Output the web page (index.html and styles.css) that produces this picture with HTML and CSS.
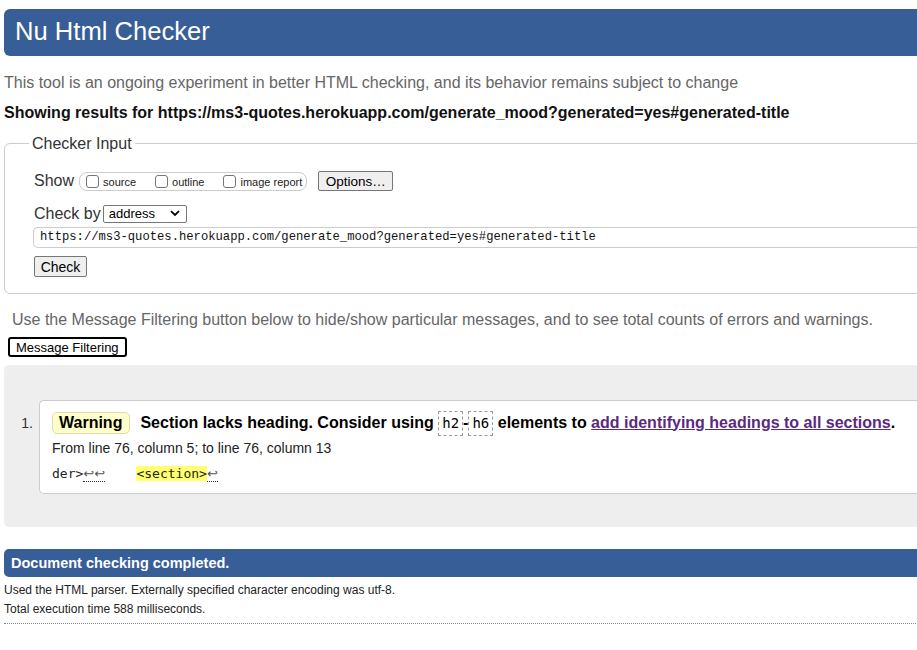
FILE: index.html
```html
<!DOCTYPE html>
<html>
<head>
<meta charset="utf-8">
<title>Nu Html Checker</title>
<link rel="stylesheet" href="styles.css">
</head>
<body>
<div class="page">
  <h1 class="masthead">Nu Html Checker</h1>
  <p class="intro">This tool is an ongoing experiment in better HTML checking, and its behavior remains subject to change</p>
  <p class="showing">Showing results for https://ms3-quotes.herokuapp.com/generate_mood?generated=yes#generated-title</p>

  <fieldset class="checker">
    <legend class="legend">Checker Input</legend>
    <div class="row row-show">
      <span class="row-label">Show</span>
      <span class="opts">
        <span class="opt"><span class="cb"></span><span class="opt-text">source</span></span>
        <span class="opt"><span class="cb"></span><span class="opt-text">outline</span></span>
        <span class="opt opt-last"><span class="cb"></span><span class="opt-text">image report</span></span>
      </span>
      <span class="btn btn-options">Options…</span>
    </div>
    <div class="row row-checkby">
      <span class="row-label">Check by</span>
      <span class="select"><span class="select-text">address</span><svg class="chev" width="10" height="7" viewBox="0 0 10 7"><path d="M1 1.2 L5 5 L9 1.2" fill="none" stroke="#000" stroke-width="1.8"/></svg></span>
    </div>
    <div class="url">https://ms3-quotes.herokuapp.com/generate_mood?generated=yes#generated-title</div>
    <div class="row row-check"><span class="btn btn-check">Check</span></div>
  </fieldset>

  <p class="filter-note">Use the Message Filtering button below to hide/show particular messages, and to see total counts of errors and warnings.</p>
  <div class="filter-wrap"><span class="btn-filter">Message Filtering</span></div>

  <div class="results">
    <ol class="msgs">
      <li class="msg">
        <span class="num">1.</span>
        <div class="msg-box">
          <p class="msg-line"><span class="badge">Warning</span><span class="msg-text">Section lacks heading. Consider using <code class="el">h2</code>-<code class="el">h6</code> elements to <a class="link" href="#">add identifying headings to all sections</a>.</span></p>
          <p class="loc">From line 76, column 5; to line 76, column 13</p>
          <p class="extract">der&gt;<span class="lf">↩↩</span>    <mark class="hl">&lt;section&gt;</mark><span class="lf">↩</span></p>
        </div>
      </li>
    </ol>
  </div>

  <h2 class="done">Document checking completed.</h2>
  <p class="meta">Used the HTML parser. Externally specified character encoding was utf-8.</p>
  <p class="meta">Total execution time 588 milliseconds.</p>
  <div class="rule"></div>
</div>
</body>
</html>
```
FILE: styles.css
```css
html { overflow: hidden; background: #fff; }
body {
  margin: 0;
  font-family: "Liberation Sans", Arial, sans-serif;
  color: #222;
}
.page {
  width: 1100px;
  padding: 9px 0 0 4px;
}
.masthead {
  margin: 0;
  height: 47px;
  line-height: 45px;
  padding-left: 11px;
  background: #375e96;
  color: #fff;
  font-size: 25.6px;
  font-weight: normal;
  border-radius: 6px 0 0 6px;
}
.intro {
  margin: 17px 0 0;
  font-size: 16px;
  line-height: 19px;
  color: #666;
}
.showing {
  margin: 11px 0 0;
  font-size: 16px;
  line-height: 19px;
  font-weight: bold;
  color: #111;
}
.checker {
  margin: 12px 0 0;
  padding: 18px 0 16px 29px;
  border: 1px solid #ccc;
  border-radius: 6px;
  min-width: 0;
}
.legend {
  margin-left: -5px;
  padding: 0 3px;
  font-size: 16px;
  line-height: 19px;
  color: #333;
}
.row {
  display: flex;
  align-items: center;
}
.row-show { height: 20px; }
.row-label {
  font-size: 16px;
  color: #333;
}
.opts {
  display: inline-flex;
  align-items: center;
  height: 17px;
  margin-left: 5px;
  padding: 0 4px 0 6px;
  border: 1px solid #ccc;
  border-radius: 8px;
}
.opt {
  display: inline-flex;
  align-items: center;
  margin-right: 19px;
}
.opt-last { margin-right: 0; }
.cb {
  width: 11px;
  height: 11px;
  border: 1px solid #767676;
  border-radius: 3px;
  background: #fff;
  margin-right: 4px;
}
.opt-text {
  font-size: 11px;
  color: #222;
  position: relative;
  top: 1px;
}
.btn {
  display: inline-flex;
  align-items: center;
  justify-content: center;
  background: #efefef;
  border: 1px solid #767676;
  border-radius: 2px;
  font-size: 13.5px;
  color: #000;
  box-sizing: border-box;
}
.btn-options {
  margin-left: 11px;
  width: 75px;
  height: 20px;
}
.row-checkby {
  margin-top: 13px;
  height: 19px;
}
.select {
  display: inline-flex;
  align-items: center;
  justify-content: space-between;
  box-sizing: border-box;
  width: 84px;
  height: 18px;
  margin-left: 2px;
  padding: 0 6px 0 5px;
  border: 1px solid #767676;
  border-radius: 2px;
  font-size: 13px;
  color: #000;
  background: #fff;
}
.url {
  margin: 4px 0 0 -1px;
  height: 19px;
  line-height: 19px;
  padding-left: 6px;
  border: 1px solid #ccc;
  border-right: none;
  border-radius: 5px 0 0 5px;
  font-family: "Liberation Mono", "DejaVu Sans Mono", monospace;
  font-size: 12.2px;
  color: #111;
}
.row-check { margin-top: 8px; }
.btn-check {
  width: 53px;
  height: 21px;
  font-size: 14px;
}
.filter-note {
  margin: 16px 0 0 8px;
  font-size: 16px;
  line-height: 19px;
  color: #666;
}
.filter-wrap {
  margin: 8px 0 0 4px;
  height: 20px;
}
.btn-filter {
  display: inline-flex;
  align-items: center;
  box-sizing: border-box;
  height: 20px;
  padding: 0 6px 0 6px;
  border: 2px solid #000;
  border-radius: 3px;
  font-size: 13px;
  color: #000;
  background: #fff;
}
.results {
  margin-top: 8px;
  height: 162px;
  background: #eee;
  border-radius: 5px 0 0 5px;
  padding-top: 35px;
  box-sizing: border-box;
}
.msgs {
  list-style: none;
  margin: 0;
  padding: 0;
}
.msg {
  display: flex;
  align-items: flex-start;
}
.num {
  width: 29px;
  padding-top: 15px;
  text-align: right;
  font-size: 14px;
  color: #333;
  box-sizing: border-box;
  margin-right: 6px;
}
.msg-box {
  flex: 1;
  height: 94px;
  box-sizing: border-box;
  padding: 9px 0 0 12px;
  background: #fff;
  border: 1px solid #ccc;
  border-right: none;
  border-radius: 5px 0 0 5px;
}
.msg-line {
  margin: 0;
  display: flex;
  align-items: center;
  height: 26px;
  font-weight: bold;
  font-size: 16px;
  color: #000;
}
.badge {
  display: inline-flex;
  align-items: center;
  box-sizing: border-box;
  height: 22px;
  padding: 0 7px 0 6px;
  background: #ffc;
  border: 1px solid #e0dca8;
  border-radius: 5px;
  margin-right: 10px;
}
.el {
  display: inline-block;
  font-family: "DejaVu Sans Mono", monospace;
  font-weight: normal;
  font-size: 14px;
  line-height: 23px;
  padding: 0 3px;
  border: 1px dashed #999;
}
.link {
  color: #5a2a82;
  text-decoration: underline;
}
.loc {
  margin: 4px 0 0;
  font-size: 14px;
  line-height: 17px;
  color: #222;
}
.extract {
  margin: 8px 0 0;
  font-family: "DejaVu Sans Mono", monospace;
  font-size: 13px;
  line-height: 18px;
  white-space: pre;
  color: #222;
}
.lf {
  font-family: "DejaVu Sans", sans-serif;
  font-size: 13px;
  color: #555;
  border-bottom: 1px dotted #333;
}
.hl {
  background: #ffff70;
  color: #222;
}
.done {
  margin: 22px 0 0;
  height: 28px;
  line-height: 28px;
  padding-left: 7px;
  background: #375e96;
  color: #fff;
  font-size: 14.5px;
  font-weight: bold;
  border-radius: 5px 0 0 5px;
}
.meta {
  margin: 6px 0 0;
  font-size: 12px;
  line-height: 14px;
  color: #222;
}
.meta + .meta { margin-top: 5px; }
.rule {
  margin-top: 7px;
  border-top: 1px dotted #888;
}
```
